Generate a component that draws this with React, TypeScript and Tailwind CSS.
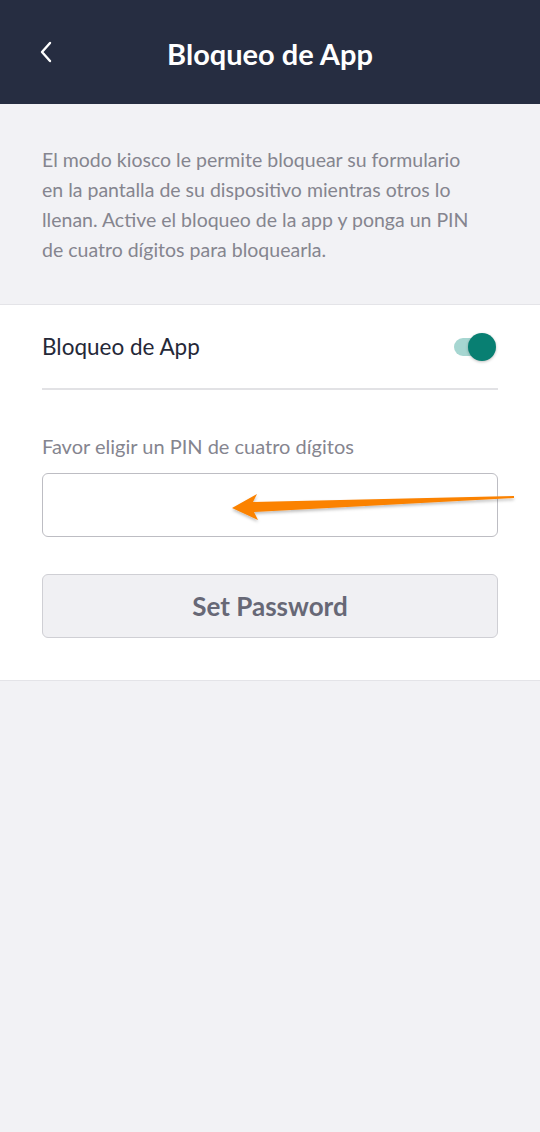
import React, { useState } from 'react';

const font = { fontFamily: 'Lato, "Noto Sans", sans-serif' };

const App: React.FC = () => {
  const [locked, setLocked] = useState(true);
  const [pin, setPin] = useState('');

  return (
    <div className="min-h-[1132px] w-[540px] bg-[#f2f2f5] flex flex-col" style={font}>
      {/* Header */}
      <div className="h-[104px] bg-[#262d41] relative flex items-center justify-center">
        <button className="absolute left-[34px] top-[38px] w-6 h-7 flex items-center justify-center text-white">
          <svg width="14" height="24" viewBox="0 0 14 24" fill="none">
            <path d="M11 3 L3 12 L11 21" stroke="white" strokeWidth="2.4" strokeLinecap="round" strokeLinejoin="round" />
          </svg>
        </button>
        <h1 className="text-white text-[29px] font-bold pt-[3px]">Bloqueo de App</h1>
      </div>

      {/* Description */}
      <div className="px-[42px] pt-[41px] pb-[39px] border-b border-[#e4e4e8]">
        <p className="max-w-[434px] text-[19.5px] leading-[30px] text-[#85858f]">
          El modo kiosco le permite bloquear su formulario en la pantalla de su dispositivo mientras otros lo
          llenan. Active el bloqueo de la app y ponga un PIN de cuatro dígitos para bloquearla.
        </p>
      </div>

      {/* Settings card */}
      <div className="bg-white px-[42px] border-b border-[#e4e4e8] pb-[42px]">
        <div className="h-[85px] flex items-center justify-between border-b-2 border-[#e2e2e5]">
          <span className="text-[22.5px] text-[#252838]">Bloqueo de App</span>
          <button
            onClick={() => setLocked(!locked)}
            className="relative w-[46px] h-[28px] flex items-center mr-[2px]"
          >
            <span className={`absolute left-[4px] right-[6px] h-[18px] rounded-full ${locked ? 'bg-[#a6d6d1]' : 'bg-[#c8c8cc]'}`} />
            <span
              className={`absolute w-[28px] h-[28px] rounded-full shadow-[0_1px_3px_rgba(0,0,0,0.25)] ${locked ? 'right-0 bg-[#087f72]' : 'left-0 bg-[#f5f5f5]'}`}
            />
          </button>
        </div>

        <label className="block mt-[43px] text-[20px] leading-[26px] text-[#85858f]">Favor eligir un PIN de cuatro dígitos</label>

        <div className="relative mt-[14px]">
          <input
            value={pin}
            onChange={(e) => setPin(e.target.value)}
            maxLength={4}
            className="w-full h-[64px] rounded-[6px] border border-[#bdbdc3] bg-white px-4 text-[18px] outline-none"
          />
          {/* Annotation arrow */}
          <svg
            className="absolute left-[185px] top-[15px] pointer-events-none"
            width="290"
            height="32"
            viewBox="0 0 290 32"
            style={{ overflow: 'visible' }}
          >
            <defs>
              <filter id="sh" x="-10%" y="-50%" width="120%" height="200%">
                <feDropShadow dx="0" dy="2" stdDeviation="1.5" floodColor="#000" floodOpacity="0.25" />
              </filter>
            </defs>
            <path
              d="M5 20 L30 6 L26 14 L287 8 L287 10 L27 24 L31 32 Z"
              fill="#fb8200"
              filter="url(#sh)"
            />
          </svg>
        </div>

        <button className="mt-[37px] w-full h-[64px] rounded-[6px] border border-[#cfcfd4] bg-[#f0f0f3] text-[26px] font-bold text-[#676876]">
          Set Password
        </button>
      </div>

      <div className="flex-1" />
    </div>
  );
};

export default App;
